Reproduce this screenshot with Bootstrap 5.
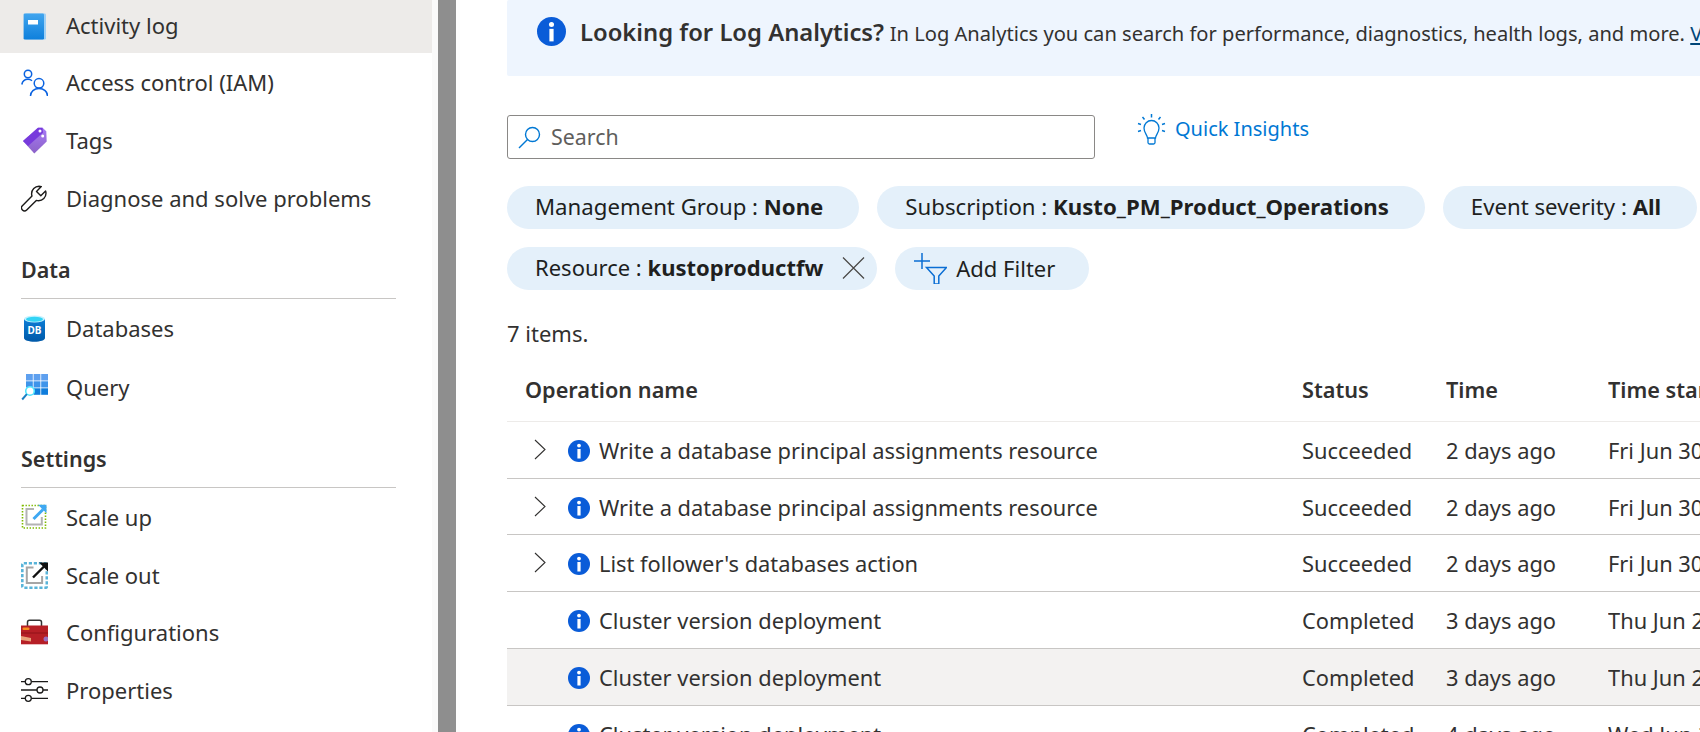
<!DOCTYPE html>
<html lang="en">
<head>
  <meta charset="UTF-8" />
  <meta name="viewport" content="width=device-width, initial-scale=1.0"/>
  <title>Activity log</title>
  <link href="https://cdn.jsdelivr.net/npm/bootstrap@5.3.0/dist/css/bootstrap.min.css" rel="stylesheet"/>
  <style>
    html, body { height: 732px; overflow: hidden; }
    body { font-family: "Noto Sans", "Liberation Sans", sans-serif; font-size: 22px; color: #323130; background: #fff; }
    .blade-side { width: 432px; flex: none; }
    .side-link { height: 58px; padding-left: 21px; gap: 18px; color: #323130; text-decoration: none; }
    .side-link svg { width: 27px; height: 27px; flex: none; }
    .side-link.is-active { height: 53px; background: #edebe9; }
    .side-link.is-active .side-label { margin-bottom: 2px; }
    .side-link.row-tall { height: 59px; }
    .side-link.row-short { height: 57px; }
    .side-head { margin: 0 36px 0 21px; padding-top: 28px; height: 72px; font-size: 21.5px; font-weight: 600; line-height: 30px; border-bottom: 1px solid #c8c6c4; }
    .split-left { width: 6px; flex: none; background: #fafafa; }
    .split-bar { width: 18px; flex: none; background: #8e8e8e; }
    .split-right { width: 4px; flex: none; background: #fbfbfb; }
    .blade-main { padding-left: 47px; min-width: 0; flex: 1; overflow: hidden; }
    .log-banner { height: 76px; width: 1300px; padding: 17px 0 0 30px; background: #eef5fe; border-radius: 2px; gap: 14px; white-space: nowrap; }
    .banner-copy { margin-top: -1px; }
    .log-banner b { font-size: 23.8px; font-weight: 600; line-height: 29px; }
    .log-banner span { line-height: 29px; font-size: 20.1px; }
    .log-banner a { color: #004578; }
    .tool-row { margin-top: 39px; gap: 42px; }
    .search-box { width: 588px; height: 44px; padding: 0 10px; gap: 10px; border: 1px solid #8a8886; border-radius: 3px; color: #605e5c; }
    .search-box input { border: 0; padding: 0; background: none; font-size: 21.4px; color: #605e5c; box-shadow: none; }
    .search-box input::placeholder { color: #605e5c; opacity: 1; }
    .insight-link { height: 30px; margin-top: -1px; gap: 9px; color: #0078d4; text-decoration: none; font-size: 20px; }
    .pill-row { gap: 18px; height: 43px; margin-top: 27px; white-space: nowrap; }
    .pill-row + .pill-row { margin-top: 18px; }
    .filter-pill { height: 43px; padding: 0 36px 2px 28px; background: #e4f0fa; color: #201f1e; gap: 12px; font-size: 22.2px; }
    .filter-pill b { font-weight: 700; }
    .filter-pill.has-close { padding-right: 12px; gap: 19px; font-size: 22px; }
    .filter-pill.add-one { padding: 0 34px 0 19px; gap: 9px; font-size: 22px; }
    .count-line { margin-top: 28px; line-height: 30px; }
    .op-table { table-layout: fixed; width: 1500px; margin: 15px 0 0; color: #323130; font-size: 21.85px; }
    .op-table th, .op-table td { height: 57px; padding: 4px 0 0; vertical-align: middle; white-space: nowrap; overflow: hidden; border-bottom: 1px solid #c8c6c4; background: transparent; color: #323130; box-shadow: none; }
    .op-table th { height: 58px; padding: 0 0 3px; font-size: 21.7px; font-weight: 600; border-bottom-color: #edebe9; }
    .op-table th.first-col { padding-left: 18px; }
    .op-table tr.is-hover td { background: #f3f2f1; }
    .op-table tr.row-short td { height: 56px; }
    .chev-slot { width: 61px; flex: none; padding-left: 27px; }
    .chev-slot svg { width: 12px; height: 21px; display: block; margin-top: -3px; }
    .info-dot { width: 22px; height: 22px; flex: none; margin-right: 9px; }
  </style>
</head>
<body>
  <svg width="0" height="0" class="position-absolute">
    <symbol id="ico-info" viewBox="0 0 22 22">
      <circle cx="11" cy="11" r="11" fill="#0a5cd8"/>
      <circle cx="11" cy="5.600" r="1.900" fill="#fff"/>
      <rect x="9.400" y="9" width="3.200" height="9.500" fill="#fff"/>
    </symbol>
    <symbol id="ico-chev" viewBox="0 0 12 21">
      <path d="M1 1l10 9.500L1 20" fill="none" stroke="#323130" stroke-width="1.100"/>
    </symbol>
    <linearGradient id="bookFill" x1="0" y1="0" x2="0" y2="1"><stop offset="0" stop-color="#41a5ee"/><stop offset="1" stop-color="#0f80dc"/></linearGradient>
    <linearGradient id="tagFill" x1="0" y1="0" x2="0" y2="1"><stop offset="0" stop-color="#a67af4"/><stop offset="1" stop-color="#8c62c8"/></linearGradient>
    <linearGradient id="dbFill" x1="0" y1="0" x2="0" y2="1"><stop offset="0" stop-color="#0a7cd6"/><stop offset="1" stop-color="#0059a8"/></linearGradient>
  </svg>

  <div class="d-flex" style="height:732px">
    <nav class="blade-side d-flex flex-column">
      <a class="side-link is-active d-flex align-items-center" href="#">
        <svg viewBox="0 0 27 27"><rect x="4" y="0.500" width="21" height="26" rx="1.200" fill="#9fd0f5"/><rect x="2.600" y="0.600" width="20.400" height="25.800" rx="1.200" fill="url(#bookFill)"/><rect x="7" y="7" width="10" height="4.500" fill="#fff"/></svg>
        <span class="side-label">Activity log</span>
      </a>
      <a class="side-link d-flex align-items-center" href="#">
        <svg viewBox="0 0 27 27" fill="none" stroke="#0a62e0" stroke-width="1.500"><circle cx="7" cy="5" r="3.700"/><path d="M.8 15.500C1.500 12 4 10.300 7 10.300c1.500 0 3 .5 4 1.500"/><circle cx="18" cy="14.300" r="4.800"/><path d="M9.500 27c0-4.500 3.600-7.500 8.500-7.500s8.500 3 8.500 7.500"/></svg>
        Access control (IAM)
      </a>
      <a class="side-link d-flex align-items-center" href="#">
        <svg viewBox="0 0 27 27"><path d="M2 14L17 .8h4.500l3.800 3.400.4 10.200L13.300 26.400z" fill="url(#tagFill)"/><path d="M2 14L17 .8h4.500l.6 4.600-15 13.500z" fill="#773adc"/><circle cx="19" cy="4" r="1.500" fill="#fff"/><circle cx="21.700" cy="9" r="1.500" fill="#fff"/></svg>
        Tags
      </a>
      <a class="side-link d-flex align-items-center" href="#">
        <svg viewBox="0 0 27 27" fill="none" stroke="#1b1a19" stroke-width="1.400" stroke-linejoin="round"><path d="M18 1.200a7.500 7.500 0 0 0-7.400 7.600c0 .8.1 1.600.4 2.300L1.400 20.700a3 3 0 0 0 4.300 4.300l9.600-9.600c.8.3 1.500.4 2.300.4a7.500 7.500 0 0 0 7.400-7.500c0-.9-.1-1.500-.4-2.300l-4.800 4.800-4.300-4.400 4.800-4.800c-.7-.3-1.500-.4-2.300-.4z"/></svg>
        Diagnose and solve problems
      </a>

      <div class="side-head">Data</div>
      <a class="side-link row-tall d-flex align-items-center" href="#">
        <svg viewBox="0 0 27 27"><path d="M3 4v19c0 2.200 4.700 3.700 10.500 3.700S24 25.200 24 23V4z" fill="url(#dbFill)"/><ellipse cx="13.500" cy="4" rx="10.500" ry="3.400" fill="#c3f1ff"/><ellipse cx="13.500" cy="4.300" rx="8.500" ry="2.500" fill="#32d4f5"/><text x="13.500" y="19" text-anchor="middle" font-size="10" font-weight="700" fill="#fff" font-family="Noto Sans, sans-serif">DB</text></svg>
        Databases
      </a>
      <a class="side-link d-flex align-items-center" href="#">
        <svg viewBox="0 0 27 27"><g fill="#5ea0ef"><rect x="5" y="0" width="6.800" height="6.500"/><rect x="12.600" y="0" width="6.800" height="6.500"/><rect x="20.200" y="0" width="6.800" height="6.500"/></g><g fill="#3e94ea"><rect x="5" y="7.300" width="6.800" height="6.200"/><rect x="12.600" y="7.300" width="6.800" height="6.200"/><rect x="20.200" y="7.300" width="6.800" height="6.200"/></g><g fill="#0f7ddc"><rect x="5" y="14.300" width="6.800" height="6.500"/><rect x="12.600" y="14.300" width="6.800" height="6.500"/><rect x="20.200" y="14.300" width="6.800" height="6.500"/></g><circle cx="9" cy="17" r="4.300" fill="#fff" stroke="#50e6ff" stroke-width="1.600"/><path d="M5.800 20.200L1.200 25.500" stroke="#1a7fc4" stroke-width="2"/></svg>
        Query
      </a>

      <div class="side-head">Settings</div>
      <a class="side-link d-flex align-items-center" href="#">
        <svg viewBox="0 0 27 27" fill="none"><rect x="1.500" y="1.500" width="23" height="22.500" stroke="#7fba00" stroke-width="1.600" stroke-dasharray="1.400 1.600"/><path d="M13 5H5.500v15.500h15.300V13" stroke="#b3b3b3" stroke-width="2"/><path d="M12.500 15L22 5.500" stroke="#3ea8f2" stroke-width="3"/><path d="M17 .8h8.500v8.500z" fill="#3ea8f2"/></svg>
        Scale up
      </a>
      <a class="side-link d-flex align-items-center" href="#">
        <svg viewBox="0 0 27 27" fill="none"><rect x="1.300" y="1.300" width="24.500" height="24.500" rx="1.500" stroke="#59b4d9" stroke-width="2.600" stroke-dasharray="3.200 1.800"/><path d="M12.500 5.500H5.800v15.500h15.300v-7" stroke="#a6a6a6" stroke-width="2"/><path d="M12 15.500L23 4.500" stroke="#111" stroke-width="2.400"/><path d="M18 .5h9v9z" fill="#111"/></svg>
        Scale out
      </a>
      <a class="side-link row-short d-flex align-items-center" href="#">
        <svg viewBox="0 0 27 27"><path d="M6.500 7V3.300C6.500 2 7.300 1.300 8.500 1.300h10c1.200 0 2 .7 2 2V7" fill="none" stroke="#333" stroke-width="1.500"/><rect x="0" y="6.500" width="27" height="18.800" fill="#b61f26"/><rect x="0" y="13.500" width="27" height="1" fill="#8f1219"/><rect x="1.500" y="8.500" width="7" height="2.500" rx="1" fill="#f78d1e"/><path d="M0 17l10 2v3.500L0 21z" fill="#e8a27a"/><circle cx="25" cy="20" r="2.500" fill="#9b6fbf"/></svg>
        Configurations
      </a>
      <a class="side-link d-flex align-items-center" href="#">
        <svg viewBox="0 0 27 27" fill="none" stroke="#1b1a19" stroke-width="1.300"><path d="M0 4.700h4M10.500 4.700H27M0 13h16M22 13h5M0 21.300h4M10.500 21.300H27"/><circle cx="7.300" cy="4.700" r="3"/><circle cx="19" cy="13" r="3"/><circle cx="7.300" cy="21.300" r="3"/></svg>
        Properties
      </a>
    </nav>
    <div class="split-left"></div>
    <div class="split-bar"></div>
    <div class="split-right"></div>

    <main class="blade-main">
      <div class="log-banner d-flex align-items-start">
        <svg class="flex-shrink-0" width="29" height="29"><use href="#ico-info"/></svg>
        <div class="banner-copy"><b>Looking for Log Analytics?</b> <span>In Log Analytics you can search for performance, diagnostics, health logs, and more. <a href="#">Visit Log Analytics</a></span></div>
      </div>

      <div class="tool-row d-flex align-items-start">
        <div class="search-box d-flex align-items-center">
          <svg width="23" height="23" viewBox="0 0 23 23" fill="none" stroke="#0078d4" stroke-width="1.400" class="flex-shrink-0"><circle cx="14.500" cy="8.500" r="7"/><path d="M9.500 13.500L1 22"/></svg>
          <input class="form-control" type="text" placeholder="Search"/>
        </div>
        <a class="insight-link d-inline-flex align-items-center" href="#">
          <svg width="29" height="31" viewBox="0 0 29 31" fill="none" stroke="#0078d4" stroke-width="1.300"><path d="M10.500 24c0-3-3.500-5-3.500-10a7.500 7.500 0 0 1 15 0c0 5-3.500 7-3.500 10zM11 24v4.500c0 1 .7 1.500 1.500 1.500h4c.8 0 1.500-.5 1.500-1.500V24"/><path d="M14.500 0v3.500M5.500 3l2 2.500M23.500 3l-2 2.500M1 9.500l3 1M28 9.500l-3 1M1 17.500l3-1M28 17.500l-3-1" stroke-width="1.500"/></svg>
          Quick Insights
        </a>
      </div>

      <div class="pill-row d-flex">
        <span class="filter-pill rounded-pill d-inline-flex align-items-center"><span>Management Group : <b>None</b></span></span>
        <span class="filter-pill rounded-pill d-inline-flex align-items-center"><span>Subscription : <b>Kusto_PM_Product_Operations</b></span></span>
        <span class="filter-pill rounded-pill d-inline-flex align-items-center"><span>Event severity : <b>All</b></span></span>
      </div>
      <div class="pill-row d-flex">
        <span class="filter-pill has-close rounded-pill d-inline-flex align-items-center">
          <span>Resource : <b>kustoproductfw</b></span>
          <svg width="23" height="22" viewBox="0 0 23 22" stroke="#484644" stroke-width="1.200"><path d="M1 .5l21 21M22 .5l-21 21"/></svg>
        </span>
        <span class="filter-pill add-one rounded-pill d-inline-flex align-items-center">
          <svg width="33" height="31" viewBox="0 0 33 31" fill="none" stroke="#0a6ed4" stroke-width="1.500"><path d="M8 0v16M0 8h16"/><path d="M12.500 14.500h20l-7.700 8.500v8h-4.600v-8z"/></svg>
          Add Filter
        </span>
      </div>

      <div class="count-line">7 items.</div>

      <table class="table op-table">
        <colgroup><col style="width:795px"/><col style="width:144px"/><col style="width:162px"/><col style="width:399px"/></colgroup>
        <thead>
          <tr><th class="first-col">Operation name</th><th>Status</th><th>Time</th><th>Time stamp</th></tr>
        </thead>
        <tbody>
          <tr>
            <td><div class="d-flex align-items-center"><span class="chev-slot"><svg><use href="#ico-chev"/></svg></span><svg class="info-dot"><use href="#ico-info"/></svg>Write a database principal assignments resource</div></td>
            <td>Succeeded</td><td>2 days ago</td><td>Fri Jun 30 2023 11:42:08</td>
          </tr>
          <tr class="row-short">
            <td><div class="d-flex align-items-center"><span class="chev-slot"><svg><use href="#ico-chev"/></svg></span><svg class="info-dot"><use href="#ico-info"/></svg>Write a database principal assignments resource</div></td>
            <td>Succeeded</td><td>2 days ago</td><td>Fri Jun 30 2023 11:42:05</td>
          </tr>
          <tr>
            <td><div class="d-flex align-items-center"><span class="chev-slot"><svg><use href="#ico-chev"/></svg></span><svg class="info-dot"><use href="#ico-info"/></svg>List follower's databases action</div></td>
            <td>Succeeded</td><td>2 days ago</td><td>Fri Jun 30 2023 11:41:57</td>
          </tr>
          <tr>
            <td><div class="d-flex align-items-center"><span class="chev-slot"></span><svg class="info-dot"><use href="#ico-info"/></svg>Cluster version deployment</div></td>
            <td>Completed</td><td>3 days ago</td><td>Thu Jun 29 2023 06:12:30</td>
          </tr>
          <tr class="is-hover">
            <td><div class="d-flex align-items-center"><span class="chev-slot"></span><svg class="info-dot"><use href="#ico-info"/></svg>Cluster version deployment</div></td>
            <td>Completed</td><td>3 days ago</td><td>Thu Jun 29 2023 06:03:11</td>
          </tr>
          <tr>
            <td><div class="d-flex align-items-center"><span class="chev-slot"></span><svg class="info-dot"><use href="#ico-info"/></svg>Cluster version deployment</div></td>
            <td>Completed</td><td>4 days ago</td><td>Wed Jun 28 2023 06:10:44</td>
          </tr>
        </tbody>
      </table>
    </main>
  </div>

  <script src="https://cdn.jsdelivr.net/npm/bootstrap@5.3.0/dist/js/bootstrap.bundle.min.js"></script>
</body>
</html>
